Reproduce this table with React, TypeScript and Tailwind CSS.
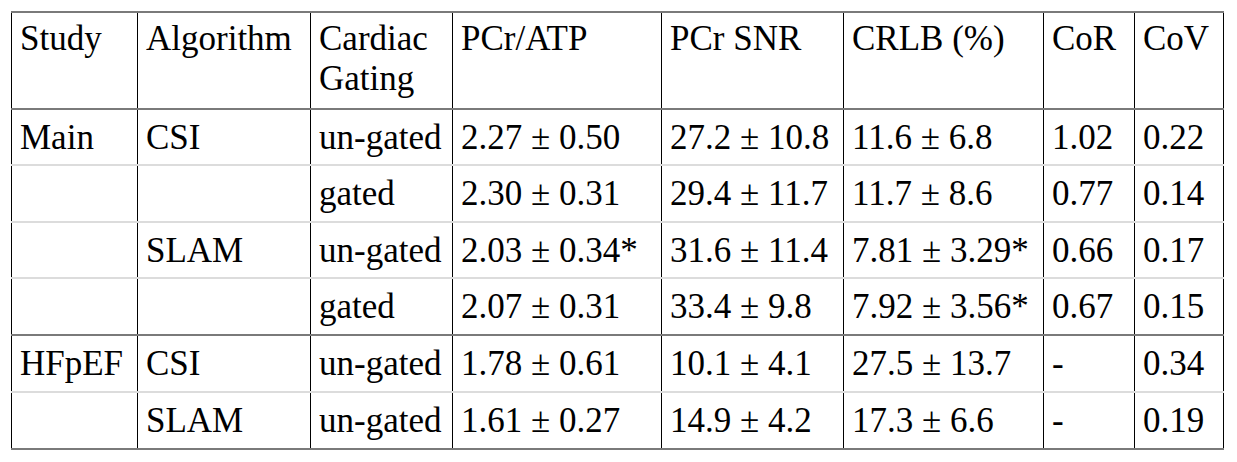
import React from "react";

const cols = "grid grid-cols-[126px_173px_142px_209px_182px_200px_91px_90px]";

type Row = { cells: string[]; h: string; b: string };

const rows: Row[] = [
  { cells: ["Main", "CSI", "un-gated", "2.27 ± 0.50", "27.2 ± 10.8", "11.6 ± 6.8", "1.02", "0.22"], h: "h-[56px]", b: "border-b-2 border-[#dcdcdc]" },
  { cells: ["", "", "gated", "2.30 ± 0.31", "29.4 ± 11.7", "11.7 ± 8.6", "0.77", "0.14"], h: "h-[57px]", b: "border-b-2 border-[#dcdcdc]" },
  { cells: ["", "SLAM", "un-gated", "2.03 ± 0.34*", "31.6 ± 11.4", "7.81 ± 3.29*", "0.66", "0.17"], h: "h-[56px]", b: "border-b-2 border-[#dcdcdc]" },
  { cells: ["", "", "gated", "2.07 ± 0.31", "33.4 ± 9.8", "7.92 ± 3.56*", "0.67", "0.15"], h: "h-[57px]", b: "border-b-2 border-[#7a7a7a]" },
  { cells: ["HFpEF", "CSI", "un-gated", "1.78 ± 0.61", "10.1 ± 4.1", "27.5 ± 13.7", "-", "0.34"], h: "h-[57px]", b: "border-b-2 border-[#dcdcdc]" },
  { cells: ["", "SLAM", "un-gated", "1.61 ± 0.27", "14.9 ± 4.2", "17.3 ± 6.6", "-", "0.19"], h: "h-[57px]", b: "border-b-2 border-[#7a7a7a]" },
];

const header = ["Study", "Algorithm", "Cardiac Gating", "PCr/ATP", "PCr SNR", "CRLB (%)", "CoR", "CoV"];

function Cell({ text, last }: { text: string; last: boolean }) {
  return (
    <div
      className={
        "border-l border-black pl-[8px] pt-[8px] leading-[40px] whitespace-nowrap " +
        (last ? "border-r" : "")
      }
    >
      {text}
    </div>
  );
}

export default function App() {
  return (
    <div className="w-[1237px] h-[462px] bg-white text-black pt-[11px] pl-[11px] text-[35px] font-['Liberation_Serif',serif]">
      <div className="w-[1213px] border-t-2 border-[#7a7a7a]">
        <div className={cols + " h-[97px] border-b-2 border-[#7a7a7a]"}>
          {header.map((t, i) => (
            <div
              key={i}
              className={
                "border-l border-black pl-[8px] pt-[6px] leading-[40px] " +
                (i === 7 ? "border-r" : "") +
                (i === 2 ? " pr-[8px]" : "")
              }
            >
              {t}
            </div>
          ))}
        </div>
        {rows.map((r, ri) => (
          <div key={ri} className={cols + " " + r.h + " " + r.b}>
            {r.cells.map((c, ci) => (
              <Cell key={ci} text={c} last={ci === 7} />
            ))}
          </div>
        ))}
      </div>
    </div>
  );
}
